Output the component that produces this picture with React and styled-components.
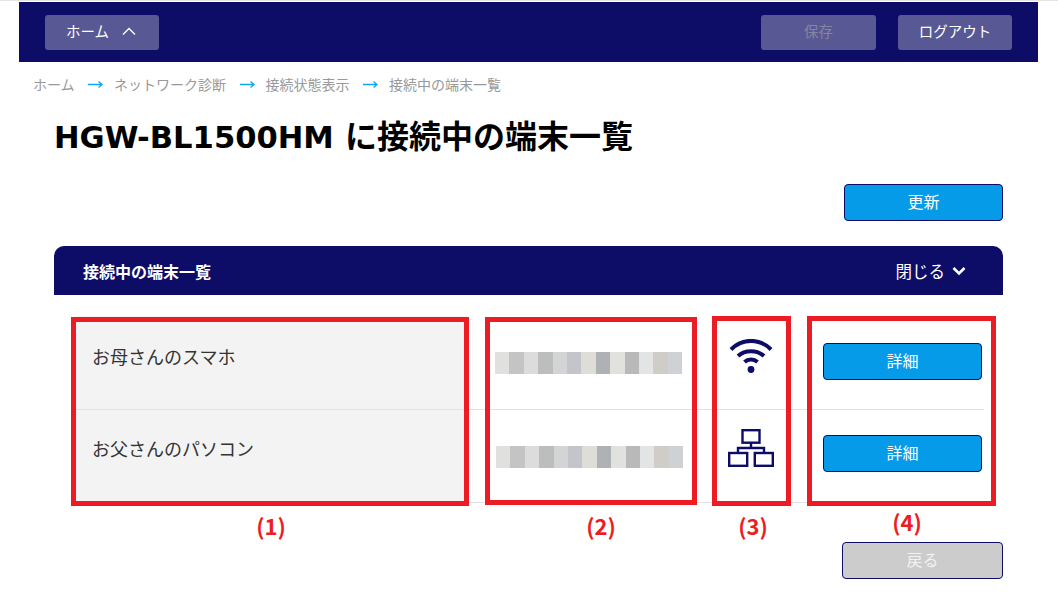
import React from 'react'
import styled, { createGlobalStyle } from 'styled-components'

const GlobalStyle = createGlobalStyle`
  html, body {
    margin: 0;
    padding: 0;
    background: #fff;
  }
  body {
    font-family: "Noto Sans CJK JP", "Noto Sans", sans-serif;
  }
`

const navy = '#0d0d68'
const blue = '#069be8'

const Page = styled.div`
  position: relative;
  width: 1058px;
  height: 610px;
  overflow: hidden;
  border-top: 1px solid #e4e4e4;
  box-sizing: border-box;
  padding-top: 1px;
`

const TopBar = styled.header`
  display: flex;
  align-items: center;
  box-sizing: border-box;
  width: 1019px;
  height: 60px;
  margin-left: 19px;
  padding: 0 26px 0 26px;
  background: ${navy};
`

const BarButton = styled.button`
  display: flex;
  align-items: center;
  justify-content: center;
  gap: 13px;
  box-sizing: border-box;
  width: ${p => p.$width}px;
  height: 35px;
  margin-left: ${p => p.$gap || 0}px;
  padding: 0 0 3px;
  border: none;
  border-radius: 3px;
  background: #585894;
  color: ${p => (p.disabled ? '#85859f' : '#fff')};
  font: 400 14.5px "Noto Sans CJK JP", sans-serif;
`

const HomeButton = styled(BarButton)`
  padding-right: 2px;
`

const Spacer = styled.div`
  flex: 1;
`

const Crumbs = styled.nav`
  display: flex;
  align-items: center;
  height: 20px;
  margin: 12px 0 0 33px;
  color: #999;
  font-size: 14px;
`

const CrumbArrow = styled.svg`
  width: 15px;
  height: 9px;
  margin: 0 11px 0 13.5px;
  fill: none;
  stroke: #12a5f2;
  stroke-width: 1.3;
`

const Content = styled.main`
  width: 949px;
  margin-left: 54px;
`

const Title = styled.h1`
  height: 44px;
  margin: 18px 0 0;
  color: #000;
  font-size: 32px;
  font-weight: 700;
  line-height: 44px;
  white-space: nowrap;
`

const ModelName = styled.span`
  margin-right: 4px;
  font-family: "DejaVu Sans", sans-serif;
  font-size: 30.6px;
`

const ActionRow = styled.div`
  display: flex;
  justify-content: flex-end;
  margin-top: ${p => p.$top}px;
`

const ActionButton = styled.button`
  box-sizing: border-box;
  width: ${p => p.$width}px;
  height: 37px;
  padding: 0 0 3px;
  border: 1px solid ${navy};
  border-radius: 4px;
  background: ${p => (p.$muted ? '#cccccc' : blue)};
  color: ${p => (p.$muted ? '#f2f2f2' : '#fff')};
  font: 400 16px "Noto Sans CJK JP", sans-serif;
`

const PanelHead = styled.div`
  display: flex;
  align-items: center;
  justify-content: space-between;
  box-sizing: border-box;
  height: 49px;
  margin-top: 25px;
  padding: 1px 37px 0 29px;
  border-radius: 10px 10px 0 0;
  background: ${navy};
  color: #fff;
  font-size: 16px;
`

const PanelTitle = styled.span`
  font-weight: 700;
`

const CloseToggle = styled.span`
  display: flex;
  align-items: center;
  gap: 7px;
  font-size: 16.5px;
`

const DeviceTable = styled.div`
  width: 909px;
  margin: 21px 0 0 21px;
`

const DeviceRow = styled.div`
  display: grid;
  grid-template-columns: 392px 243px 81px 193px;
  height: ${p => p.$height}px;
  box-sizing: border-box;
  border-bottom: 1px solid #e2e2e2;
`

const NameCell = styled.div`
  box-sizing: border-box;
  padding: ${p => p.$top}px 0 0 17px;
  background: #f3f3f3;
  color: #333;
  font-size: 18px;
  line-height: 30px;
`

const ValueCell = styled.div`
  padding: 36px 0 0 ${p => p.$inset}px;
`

const Mosaic = styled.div`
  display: flex;
  width: 187px;
  height: 22px;
  filter: blur(0.7px);
`

const MosaicBlock = styled.div`
  flex: 1;
  background: ${p => p.$color};
`

const IconCell = styled.div`
  display: flex;
  justify-content: center;
  padding-top: ${p => p.$top}px;
  color: ${navy};
`

const ButtonCell = styled.div`
  padding: ${p => p.$top}px 0 0 32px;
`

const Frame = styled.div`
  position: absolute;
  left: ${p => p.$left}px;
  top: ${p => p.$top}px;
  box-sizing: border-box;
  width: ${p => p.$width}px;
  height: ${p => p.$height}px;
  border: 5px solid #ed1c24;
`

const FrameLabel = styled.div`
  position: absolute;
  left: ${p => p.$left}px;
  top: ${p => p.$top}px;
  width: 40px;
  color: #ed1c24;
  font-size: 22px;
  font-weight: 700;
  line-height: 24px;
  text-align: center;
`

const mosaicColors = [
  '#e0e0df', '#c4c4c4', '#dcdcdc', '#bcbdbd', '#d4d4d7', '#c3c5ca', '#dfddd8',
  '#aeb2b4', '#e1e1de', '#b9b9b9', '#e3e5e4', '#d0ccc8', '#ced2d5',
]

function Arrow() {
  return (
    <CrumbArrow viewBox="0 0 15 9">
      <path d="M0 4.5h14M10.5 1.5l3.5 3-3.5 3" />
    </CrumbArrow>
  )
}

function WifiIcon() {
  return (
    <svg width="44" height="34" viewBox="0 0 44 34" fill="none" stroke="currentColor" strokeWidth="4">
      <path d="M2 10.5C13 -1 31 -1 42 10.5" />
      <path d="M9 17C16 10.5 28 10.5 35 17" />
      <path d="M15.5 23C19 19.8 25 19.8 28.5 23" />
      <circle cx="22" cy="30.5" r="3.4" fill="currentColor" stroke="none" />
    </svg>
  )
}

function NetworkIcon() {
  return (
    <svg width="46" height="38" viewBox="0 0 46 38" fill="none" stroke="currentColor" strokeWidth="2.4">
      <rect x="14.5" y="1.2" width="17" height="12.5" />
      <rect x="1.2" y="24" width="18" height="12.8" />
      <rect x="26.8" y="24" width="18" height="12.8" />
      <path d="M23 14v5M10 24v-5h26v5" />
    </svg>
  )
}

const devices = [
  { name: 'お母さんのスマホ', icon: <WifiIcon />, nameTop: 25, iconTop: 23, inset: 28, buttonTop: 27, height: 94 },
  { name: 'お父さんのパソコン', icon: <NetworkIcon />, nameTop: 23, iconTop: 19, inset: 29, buttonTop: 25, height: 93 },
]

const frames = [
  { left: 71, top: 316, width: 398, height: 189, label: 251, labelTop: 512 },
  { left: 485, top: 316, width: 212, height: 188, label: 581, labelTop: 512 },
  { left: 712, top: 315, width: 79, height: 190, label: 733, labelTop: 512 },
  { left: 807, top: 315, width: 189, height: 190, label: 887, labelTop: 508 },
]

export default function App() {
  return (
    <Page>
      <GlobalStyle />
      <TopBar>
        <HomeButton $width={114}>
          ホーム
          <svg width="14" height="8" viewBox="0 0 14 8" fill="none" stroke="#fff" strokeWidth="1.4">
            <path d="M1 7.5L7 1.5l6 6" />
          </svg>
        </HomeButton>
        <Spacer />
        <BarButton $width={115} disabled>保存</BarButton>
        <BarButton $width={114} $gap={22}>ログアウト</BarButton>
      </TopBar>

      <Crumbs>
        ホーム<Arrow />ネットワーク診断<Arrow />接続状態表示<Arrow />接続中の端末一覧
      </Crumbs>

      <Content>
        <Title><ModelName>HGW-BL1500HM</ModelName> に接続中の端末一覧</Title>

        <ActionRow $top={28}>
          <ActionButton $width={159}>更新</ActionButton>
        </ActionRow>

        <PanelHead>
          <PanelTitle>接続中の端末一覧</PanelTitle>
          <CloseToggle>
            閉じる
            <svg width="14" height="10" viewBox="0 0 14 10" fill="none" stroke="#fff" strokeWidth="2.6">
              <path d="M1.5 2l5.5 5.5L12.5 2" />
            </svg>
          </CloseToggle>
        </PanelHead>

        <DeviceTable>
          {devices.map(d => (
            <DeviceRow key={d.name} $height={d.height}>
              <NameCell $top={d.nameTop}>{d.name}</NameCell>
              <ValueCell $inset={d.inset}>
                <Mosaic>
                  {mosaicColors.map((c, i) => <MosaicBlock key={i} $color={c} />)}
                </Mosaic>
              </ValueCell>
              <IconCell $top={d.iconTop}>{d.icon}</IconCell>
              <ButtonCell $top={d.buttonTop}>
                <ActionButton $width={159}>詳細</ActionButton>
              </ButtonCell>
            </DeviceRow>
          ))}
        </DeviceTable>

        <ActionRow $top={39}>
          <ActionButton $width={161} $muted>戻る</ActionButton>
        </ActionRow>
      </Content>

      {frames.map((f, i) => (
        <React.Fragment key={f.left}>
          <Frame $left={f.left} $top={f.top} $width={f.width} $height={f.height} />
          <FrameLabel $left={f.label} $top={f.labelTop}>({i + 1})</FrameLabel>
        </React.Fragment>
      ))}
    </Page>
  )
}
